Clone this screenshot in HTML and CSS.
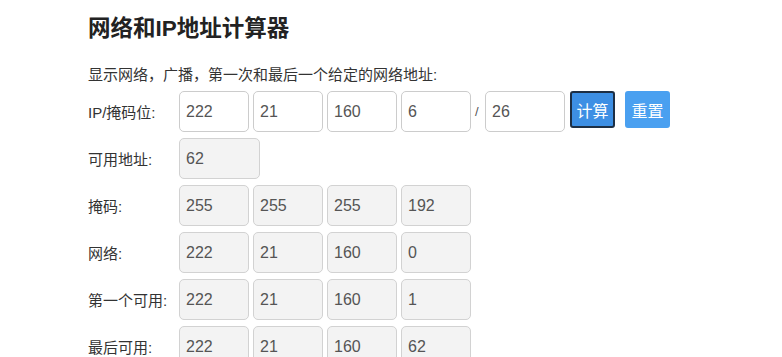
FILE: index.html
```html
<!DOCTYPE html>
<html lang="zh-CN">
<head>
  <meta charset="UTF-8" />
  <title>网络和IP地址计算器</title>
  <link rel="stylesheet" href="styles.css">
</head>
<body>
  <div class="page">
    <h1 class="title">网络和IP地址计算器</h1>
    <p class="intro">显示网络，广播，第一次和最后一个给定的网络地址:</p>

    <div class="calc">
      <div class="row">
        <label class="lbl">IP/掩码位:</label>
        <div class="fields">
          <input class="ip" type="text" value="222" />
          <input class="ip" type="text" value="21" />
          <input class="ip" type="text" value="160" />
          <input class="ip" type="text" value="6" />
          <span class="slash">/</span>
          <input class="ip mask" type="text" value="26" />
          <button class="btn active">计算</button>
          <button class="btn">重置</button>
        </div>
      </div>

      <div class="row">
        <label class="lbl">可用地址:</label>
        <div class="fields">
          <input class="ip wide" type="text" value="62" disabled />
        </div>
      </div>

      <div class="row">
        <label class="lbl">掩码:</label>
        <div class="fields">
          <input class="ip" type="text" value="255" disabled />
          <input class="ip" type="text" value="255" disabled />
          <input class="ip" type="text" value="255" disabled />
          <input class="ip" type="text" value="192" disabled />
        </div>
      </div>

      <div class="row">
        <label class="lbl">网络:</label>
        <div class="fields">
          <input class="ip" type="text" value="222" disabled />
          <input class="ip" type="text" value="21" disabled />
          <input class="ip" type="text" value="160" disabled />
          <input class="ip" type="text" value="0" disabled />
        </div>
      </div>

      <div class="row">
        <label class="lbl">第一个可用:</label>
        <div class="fields">
          <input class="ip" type="text" value="222" disabled />
          <input class="ip" type="text" value="21" disabled />
          <input class="ip" type="text" value="160" disabled />
          <input class="ip" type="text" value="1" disabled />
        </div>
      </div>

      <div class="row">
        <label class="lbl">最后可用:</label>
        <div class="fields">
          <input class="ip" type="text" value="222" disabled />
          <input class="ip" type="text" value="21" disabled />
          <input class="ip" type="text" value="160" disabled />
          <input class="ip" type="text" value="62" disabled />
        </div>
      </div>
    </div>
  </div>
</body>
</html>
```

FILE: styles.css
```css
body {
  margin: 0;
  background: #fff;
  color: #333;
  font-family: "Liberation Sans", "Noto Sans CJK SC", sans-serif;
}

.page {
  padding: 16px 0 0 88px;
}

.title {
  margin: 0;
  font-size: 22.5px;
  line-height: 26px;
  font-weight: bold;
  color: #222;
}

.intro {
  margin: 23px 0 0;
  font-size: 15px;
  line-height: 20px;
}

/* filas del formulario */
.calc {
  margin-top: 6px;
  display: flex;
  flex-direction: column;
  gap: 6px;
}

.row {
  display: flex;
  align-items: center;
}

.lbl {
  width: 91px;
  font-size: 15px;
}

.fields {
  display: flex;
  align-items: flex-start;
  gap: 4px;
}

.ip {
  width: 70px;
  height: 41px;
  box-sizing: border-box;
  padding: 0 6px;
  border: 1px solid #ccc;
  border-radius: 5px;
  background: #fff;
  color: #555;
  font-family: "Liberation Sans", sans-serif;
  font-size: 16px;
}

.ip.wide {
  width: 81px;
}

.ip.mask {
  width: 80px;
}

.ip:disabled {
  background: #f3f3f3;
  color: #555;
  border-color: #d2d2d2;
}

.slash {
  width: 6px;
  line-height: 41px;
  font-size: 13px;
  color: #555;
}

.btn {
  width: 45px;
  height: 37px;
  padding: 0;
  border: 2px solid #4aa0f0;
  border-radius: 3px;
  background: #4aa0f0;
  color: #fff;
  font-family: "Noto Sans CJK SC", sans-serif;
  font-size: 16px;
  cursor: pointer;
}

.btn.active {
  margin-left: 1px;
  margin-right: 6px;
  background: #3d8fe4;
  border-color: #1d2f45;
}
```
